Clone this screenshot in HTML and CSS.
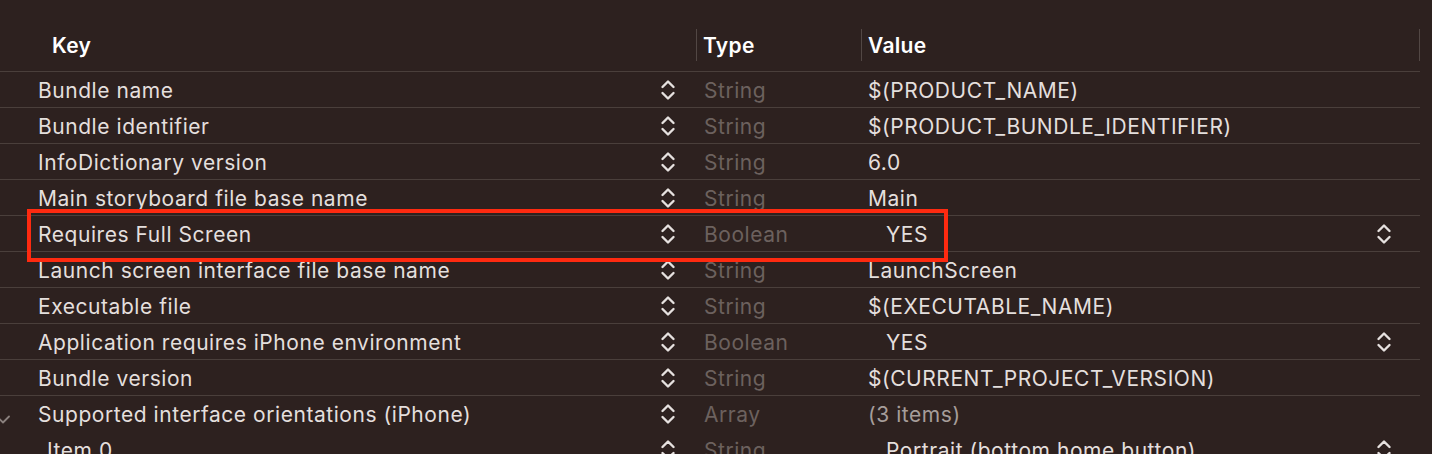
FILE: index.html
```html
<!DOCTYPE html>
<html>
<head>
<meta charset="utf-8">
<link rel="stylesheet" href="styles.css">
</head>
<body>
<div class="plist">
  <div class="header">
    <div class="hcell hkey">Key</div>
    <div class="hcell htype">Type</div>
    <div class="hcell hvalue">Value</div>
    <div class="hcell hend"></div>
  </div>

  <div class="row">
    <div class="key"><span>Bundle name</span><svg class="chev" viewBox="0 0 16 22"><path d="M2.5 8 L8 2.5 L13.5 8 M2.5 14 L8 19.5 L13.5 14"/></svg></div>
    <div class="type">String</div>
    <div class="value">$(PRODUCT_NAME)</div>
  </div>
  <div class="row">
    <div class="key"><span>Bundle identifier</span><svg class="chev" viewBox="0 0 16 22"><path d="M2.5 8 L8 2.5 L13.5 8 M2.5 14 L8 19.5 L13.5 14"/></svg></div>
    <div class="type">String</div>
    <div class="value">$(PRODUCT_BUNDLE_IDENTIFIER)</div>
  </div>
  <div class="row">
    <div class="key"><span>InfoDictionary version</span><svg class="chev" viewBox="0 0 16 22"><path d="M2.5 8 L8 2.5 L13.5 8 M2.5 14 L8 19.5 L13.5 14"/></svg></div>
    <div class="type">String</div>
    <div class="value">6.0</div>
  </div>
  <div class="row">
    <div class="key"><span>Main storyboard file base name</span><svg class="chev" viewBox="0 0 16 22"><path d="M2.5 8 L8 2.5 L13.5 8 M2.5 14 L8 19.5 L13.5 14"/></svg></div>
    <div class="type">String</div>
    <div class="value">Main</div>
  </div>
  <div class="row">
    <div class="key"><span>Requires Full Screen</span><svg class="chev" viewBox="0 0 16 22"><path d="M2.5 8 L8 2.5 L13.5 8 M2.5 14 L8 19.5 L13.5 14"/></svg></div>
    <div class="type">Boolean</div>
    <div class="value bool"><span>YES</span><svg class="chev" viewBox="0 0 16 22"><path d="M2.5 8 L8 2.5 L13.5 8 M2.5 14 L8 19.5 L13.5 14"/></svg></div>
  </div>
  <div class="row">
    <div class="key"><span>Launch screen interface file base name</span><svg class="chev" viewBox="0 0 16 22"><path d="M2.5 8 L8 2.5 L13.5 8 M2.5 14 L8 19.5 L13.5 14"/></svg></div>
    <div class="type">String</div>
    <div class="value">LaunchScreen</div>
  </div>
  <div class="row">
    <div class="key"><span>Executable file</span><svg class="chev" viewBox="0 0 16 22"><path d="M2.5 8 L8 2.5 L13.5 8 M2.5 14 L8 19.5 L13.5 14"/></svg></div>
    <div class="type">String</div>
    <div class="value">$(EXECUTABLE_NAME)</div>
  </div>
  <div class="row">
    <div class="key"><span>Application requires iPhone environment</span><svg class="chev" viewBox="0 0 16 22"><path d="M2.5 8 L8 2.5 L13.5 8 M2.5 14 L8 19.5 L13.5 14"/></svg></div>
    <div class="type">Boolean</div>
    <div class="value bool"><span>YES</span><svg class="chev" viewBox="0 0 16 22"><path d="M2.5 8 L8 2.5 L13.5 8 M2.5 14 L8 19.5 L13.5 14"/></svg></div>
  </div>
  <div class="row">
    <div class="key"><span>Bundle version</span><svg class="chev" viewBox="0 0 16 22"><path d="M2.5 8 L8 2.5 L13.5 8 M2.5 14 L8 19.5 L13.5 14"/></svg></div>
    <div class="type">String</div>
    <div class="value">$(CURRENT_PROJECT_VERSION)</div>
  </div>
  <div class="row noline">
    <div class="key"><svg class="disclosure" viewBox="0 0 10 10"><path d="M-3 2.5 L3 8.5 L9 2.5"/></svg><span>Supported interface orientations (iPhone)</span><svg class="chev" viewBox="0 0 16 22"><path d="M2.5 8 L8 2.5 L13.5 8 M2.5 14 L8 19.5 L13.5 14"/></svg></div>
    <div class="type">Array</div>
    <div class="value dim">(3 items)</div>
  </div>
  <div class="row noline">
    <div class="key child"><span>Item 0</span><svg class="chev" viewBox="0 0 16 22"><path d="M2.5 8 L8 2.5 L13.5 8 M2.5 14 L8 19.5 L13.5 14"/></svg></div>
    <div class="type">String</div>
    <div class="value bool"><span>Portrait (bottom home button)</span><svg class="chev" viewBox="0 0 16 22"><path d="M2.5 8 L8 2.5 L13.5 8 M2.5 14 L8 19.5 L13.5 14"/></svg></div>
  </div>

  <div class="highlight"></div>
</div>
</body>
</html>
```

FILE: styles.css
```css
html, body {
  margin: 0;
  padding: 0;
  height: 454px;
  overflow: hidden;
  background: #2d211f;
}

.plist {
  position: relative;
  width: 1432px;
  font-family: "Inter", "Noto Sans", sans-serif;
  font-size: 21px;
  letter-spacing: 0.55px;
  color: #e4dfdd;
}

.header {
  display: flex;
  align-items: flex-end;
  height: 72px;
  box-sizing: border-box;
  padding-bottom: 10px;
  border-bottom: 1px solid #4a3f3b;
  width: 1420px;
}

.hcell {
  height: 32px;
  display: flex;
  align-items: center;
  font-weight: 600;
  letter-spacing: 0.3px;
  color: #ffffff;
  box-sizing: border-box;
  padding-top: 1px;
}

.hkey {
  width: 696px;
  padding-left: 52px;
}

.htype {
  width: 165px;
  padding-left: 6px;
  border-left: 1px solid #524744;
}

.hvalue {
  width: 558px;
  padding-left: 6px;
  border-left: 1px solid #524744;
}

.hend {
  width: 1px;
  border-left: 1px solid #524744;
}

.row {
  display: flex;
  align-items: center;
  height: 36px;
  width: 1420px;
  box-sizing: border-box;
  padding-top: 1px;
  border-bottom: 1px solid #4a3f3b;
}

.row.noline {
  border-bottom: none;
}

.key {
  position: relative;
  width: 696px;
  box-sizing: border-box;
  padding-left: 38px;
  padding-right: 20px;
  display: flex;
  align-items: center;
  justify-content: space-between;
}

.key.child {
  padding-left: 47px;
}

.type {
  width: 165px;
  box-sizing: border-box;
  padding-left: 8px;
  color: #6c615e;
}

.value {
  flex: 1;
  box-sizing: border-box;
  padding-left: 7px;
  padding-right: 28px;
  display: flex;
  align-items: center;
  justify-content: space-between;
}

.value.bool {
  padding-left: 25px;
}

.value.dim {
  color: #a69d9a;
}

.chev {
  width: 16px;
  height: 22px;
  flex: none;
  margin-top: -1px;
}

.chev path {
  fill: none;
  stroke: #e6e1df;
  stroke-width: 2.4;
  stroke-linecap: round;
  stroke-linejoin: round;
}

.disclosure {
  position: absolute;
  left: 0;
  top: 12px;
  width: 10px;
  height: 10px;
}

.disclosure path {
  fill: none;
  stroke: #8a807d;
  stroke-width: 1.8;
  stroke-linecap: round;
  stroke-linejoin: round;
}

.highlight {
  position: absolute;
  left: 27px;
  top: 209px;
  width: 921px;
  height: 53px;
  box-sizing: border-box;
  border: 4px solid #fe2a10;
}
```
